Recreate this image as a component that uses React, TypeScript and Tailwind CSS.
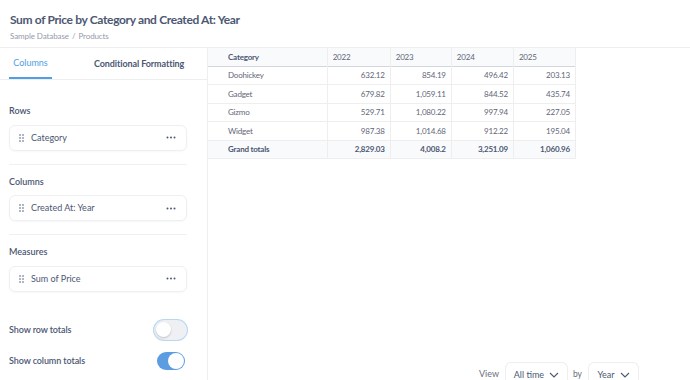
import React from "react";

const rows = [
  ["Doohickey", "632.12", "854.19", "496.42", "203.13"],
  ["Gadget", "679.82", "1,059.11", "844.52", "435.74"],
  ["Gizmo", "529.71", "1,080.22", "997.94", "227.05"],
  ["Widget", "987.38", "1,014.68", "912.22", "195.04"],
];
const totals = ["Grand totals", "2,829.03", "4,008.2", "3,251.09", "1,060.96"];
const years = ["2022", "2023", "2024", "2025"];
const colW = ["w-[119px]", "w-[63px]", "w-[61px]", "w-[62px]", "w-[62px]"];

function Grip() {
  return (
    <svg width="5" height="8" viewBox="0 0 5 8" className="text-[#4c5773]">
      {[0, 3, 6].map((y) => (
        <g key={y}>
          <circle cx="1" cy={y + 1} r="0.8" fill="currentColor" />
          <circle cx="4" cy={y + 1} r="0.8" fill="currentColor" />
        </g>
      ))}
    </svg>
  );
}

function Dots() {
  return (
    <svg width="10" height="3" viewBox="0 0 10 3" className="text-[#4c5773]">
      <circle cx="1.5" cy="1.5" r="1" fill="currentColor" />
      <circle cx="5" cy="1.5" r="1" fill="currentColor" />
      <circle cx="8.5" cy="1.5" r="1" fill="currentColor" />
    </svg>
  );
}

function Chevron() {
  return (
    <svg width="10" height="6" viewBox="0 0 10 6" fill="none" stroke="#4c5773" strokeWidth="1.1">
      <path d="M1 1l4 4 4-4" />
    </svg>
  );
}

function FieldCard({ label }: { label: string }) {
  return (
    <div className="flex h-[26px] items-center rounded-[6px] border border-[#eeeff2] pl-[9px] pr-[10px] shadow-[0_1px_2px_rgba(0,0,0,0.03)]">
      <Grip />
      <span className="ml-[7px] flex-1 text-[9px] text-[#4c5773]">{label}</span>
      <Dots />
    </div>
  );
}

function Section({ title, label, last }: { title: string; label: string; last?: boolean }) {
  return (
    <div className={last ? "pt-[10px]" : "border-b border-[#f0f0f0] pt-[10px] pb-[13px]"}>
      <div className="mb-[7px] text-[9px] font-semibold text-[#4c5773]">{title}</div>
      <FieldCard label={label} />
    </div>
  );
}

export default function App() {
  return (
    <div className="flex h-[380px] w-[690px] flex-col overflow-hidden bg-white font-['Lato',sans-serif] text-[#4c5773]">
      <header className="h-[48px] border-b border-[#eeeeee] px-[10px] pt-[12px]">
        <h1 className="text-[12px] leading-[15px] font-bold tracking-[-0.35px] text-[#4c5773]">
          Sum of Price by Category and Created At: Year
        </h1>
        <div className="mt-[3px] text-[8px] tracking-[-0.1px] text-[#949aab]">
          Sample Database<span className="mx-[3px]">/</span>Products
        </div>
      </header>

      <div className="flex flex-1">
        <aside className="flex w-[208px] flex-col border-r border-[#eeeeee]">
          <div className="flex h-[32px] border-b border-[#eeeeee] px-[9px]">
            <div className="flex w-[43px] items-center justify-center border-b-2 border-[#509ee3] text-[9px] text-[#509ee3]">
              Columns
            </div>
            <div className="ml-[42px] flex items-center text-[9px] font-bold tracking-[-0.1px] text-[#4c5773]">
              Conditional Formatting
            </div>
          </div>
          <div className="px-[9px] pr-[20px]">
            <div className="pt-[14px]" />
            <Section title="Rows" label="Category" />
            <Section title="Columns" label="Created At: Year" />
            <Section title="Measures" label="Sum of Price" last />
            <div className="mt-[28px] flex items-center justify-between">
              <span className="text-[9px] font-semibold tracking-[-0.1px]">Show row totals</span>
              <div className="flex h-[20px] w-[33px] items-center rounded-full bg-[#eef0f3] px-[2px] ring-1 ring-[#b9d7f5]">
                <div className="h-[15px] w-[15px] rounded-full bg-white shadow-[0_1px_2px_rgba(0,0,0,0.2)]" />
              </div>
            </div>
            <div className="mt-[12px] flex items-center justify-between">
              <span className="text-[9px] font-semibold tracking-[-0.1px]">Show column totals</span>
              <div className="mr-[2px] flex h-[18px] w-[28px] items-center justify-end rounded-full bg-[#5b9de0] px-[1px]">
                <div className="h-[16px] w-[16px] rounded-full bg-white" />
              </div>
            </div>
          </div>
        </aside>

        <main className="flex flex-1 flex-col">
          <table className="w-[368px] table-fixed border-collapse text-[8px] tracking-[-0.2px]">
            <thead>
              <tr className="h-[18px] border-b border-[#d3d6dc] bg-[#f9fafb]">
                {["Category", ...years].map((h, i) => (
                  <th
                    key={h}
                    className={`${colW[i]} border-r border-[#eeeeee] text-left ${i === 0 ? "pl-[20px] font-bold text-[#4c5773]" : "pl-[5px] font-normal text-[#5f6678]"}`}
                  >
                    {h}
                  </th>
                ))}
              </tr>
            </thead>
            <tbody>
              {rows.map((r) => (
                <tr key={r[0]} className="h-[18.5px] border-b border-[#eeeeee]">
                  {r.map((c, i) => (
                    <td
                      key={i}
                      className={`border-r border-[#eeeeee] ${i === 0 ? "pl-[20px] text-left" : "pr-[5px] text-right"} text-[#5f6678]`}
                    >
                      {c}
                    </td>
                  ))}
                </tr>
              ))}
              <tr className="h-[18px] border-b border-[#eeeeee] bg-[#f9fafb]">
                {totals.map((c, i) => (
                  <td
                    key={i}
                    className={`border-r border-[#eeeeee] font-bold ${i === 0 ? "pl-[20px] text-left" : "pr-[5px] text-right"} text-[#4c5773]`}
                  >
                    {c}
                  </td>
                ))}
              </tr>
            </tbody>
          </table>

          <div className="mt-auto flex items-start justify-end gap-[5px] pr-[51px]">
            <span className="pt-[7px] text-[9px] leading-[10px] text-[#696e7b]">View</span>
            <div className="ml-[1px] flex h-[18px] w-[63px] items-start justify-center gap-[5px] rounded-t-[6px] border border-b-0 border-[#eeeeee] pt-[7px] text-[9px] leading-[10px]">
              All time <span className="pt-[2px]"><Chevron /></span>
            </div>
            <span className="pt-[7px] text-[8.5px] leading-[10px] text-[#696e7b]">by</span>
            <div className="ml-[1px] flex h-[18px] w-[51px] items-start justify-center gap-[5px] rounded-t-[6px] border border-b-0 border-[#eeeeee] pt-[7px] text-[9px] leading-[10px]">
              Year <span className="pt-[2px]"><Chevron /></span>
            </div>
          </div>
        </main>
      </div>
    </div>
  );
}
